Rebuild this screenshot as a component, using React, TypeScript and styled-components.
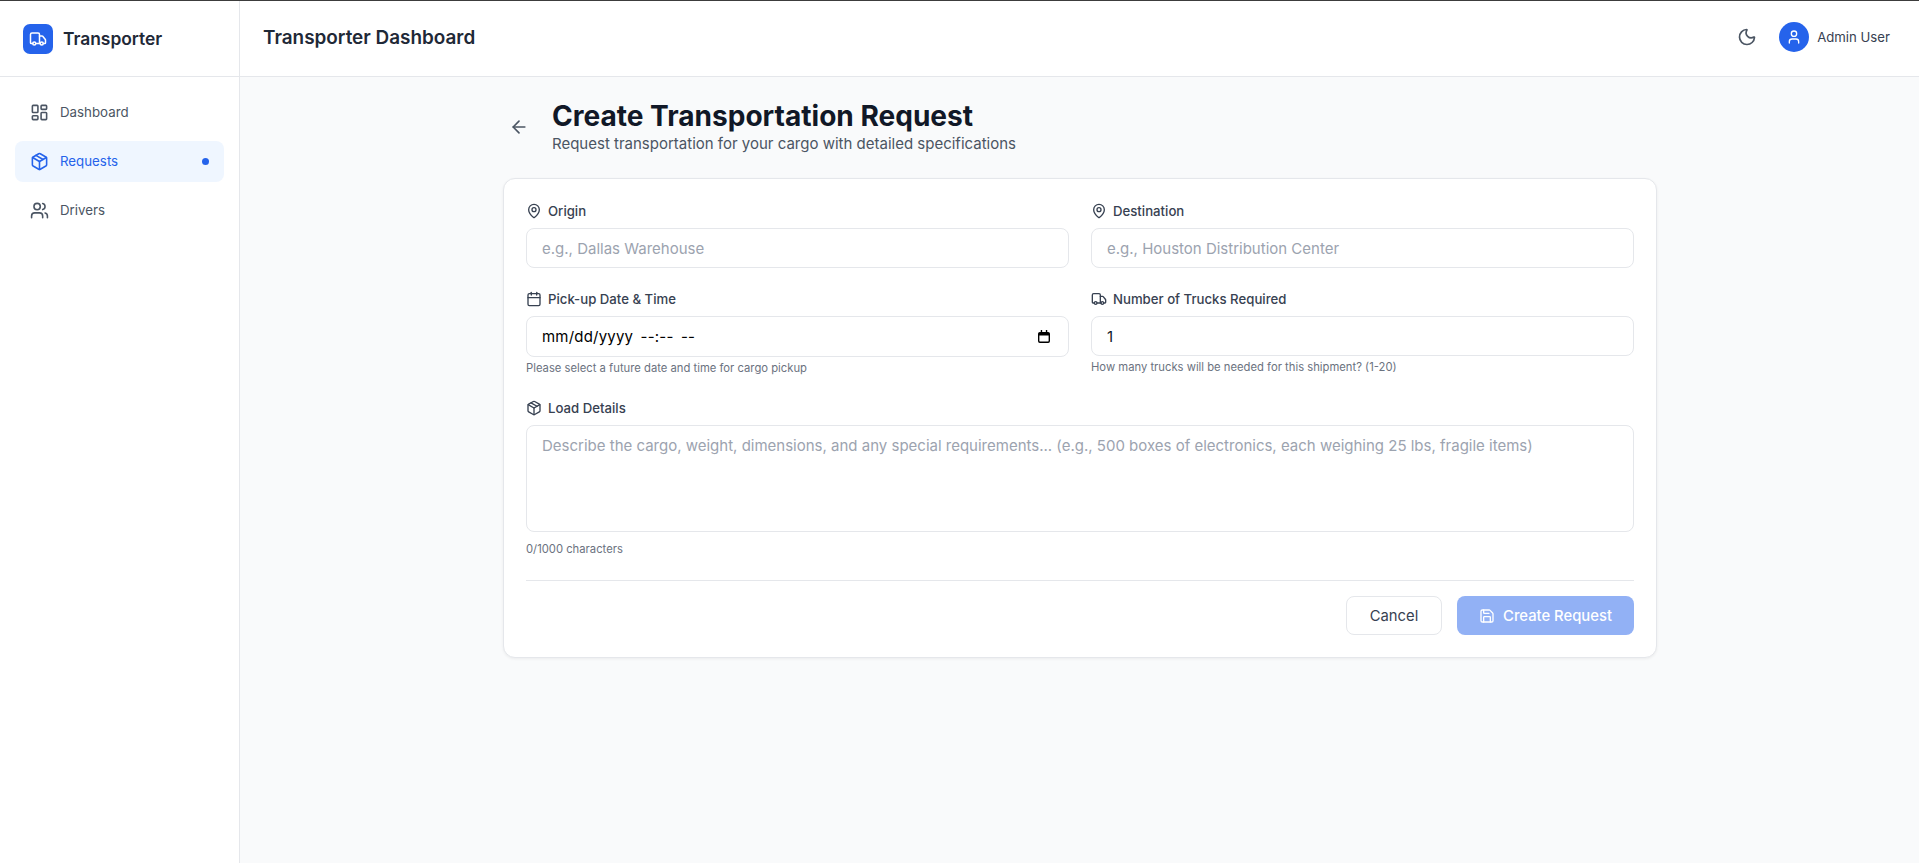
import React from 'react';
import styled, { createGlobalStyle } from 'styled-components';
import { ArrowLeft, Calendar, LayoutDashboard, MapPin, Moon, Package, Save, Truck, User, Users } from 'lucide-react';

const GlobalStyle = createGlobalStyle`
  * { box-sizing: border-box; }
  html, body { margin: 0; padding: 0; height: 100%; }
  body {
    font-family: Inter, "Liberation Sans", sans-serif;
    background: #f9fafb;
    color: #111827;
  }
`;

const Shell = styled.div`
  display: flex;
  height: 863px;
  border-top: 1px solid #3c3c3c;
  overflow: hidden;
`;

const Sidebar = styled.aside`
  width: 240px;
  flex-shrink: 0;
  background: #fff;
  border-right: 1px solid #e5e7eb;
`;

const Brand = styled.div`
  display: flex;
  align-items: center;
  gap: 10px;
  height: 76px;
  padding: 0 23px;
  border-bottom: 1px solid #e5e7eb;
`;

const BrandLogo = styled.div`
  width: 30px;
  height: 30px;
  border-radius: 7px;
  background: #2563eb;
  color: #fff;
  display: flex;
  align-items: center;
  justify-content: center;
`;

const BrandName = styled.span`
  font-size: 17.4px;
  font-weight: 600;
  color: #1f2937;
`;

const Nav = styled.nav`
  display: flex;
  flex-direction: column;
  gap: 8px;
  padding: 15px;
`;

const NavItem = styled.a<{ $active?: boolean }>`
  display: flex;
  align-items: center;
  gap: 11px;
  height: 41px;
  padding: 0 15px 1px;
  border-radius: 8px;
  font-size: 13.3px;
  font-weight: 400;
  color: ${(p) => (p.$active ? '#2563eb' : '#4b5563')};
  background: ${(p) => (p.$active ? '#eff6ff' : 'transparent')};
`;

const NavDot = styled.span`
  width: 7px;
  height: 7px;
  border-radius: 50%;
  background: #2563eb;
  margin-left: auto;
`;

const Column = styled.div`
  flex: 1;
  min-width: 0;
  display: flex;
  flex-direction: column;
`;

const Header = styled.header`
  display: flex;
  align-items: center;
  justify-content: space-between;
  height: 76px;
  padding: 0 29px 3px 23px;
  background: #fff;
  border-bottom: 1px solid #e5e7eb;
`;

const HeaderTitle = styled.h1`
  margin: 0;
  font-size: 18.9px;
  font-weight: 600;
  color: #1f2937;
`;

const HeaderRight = styled.div`
  display: flex;
  align-items: center;
  gap: 22px;
`;

const ThemeToggle = styled.button`
  display: flex;
  padding: 0;
  border: none;
  background: none;
  color: #4b5563;
`;

const UserBox = styled.div`
  display: flex;
  align-items: center;
  gap: 8px;
`;

const Avatar = styled.div`
  width: 30px;
  height: 30px;
  border-radius: 50%;
  background: #2563eb;
  color: #fff;
  display: flex;
  align-items: center;
  justify-content: center;
`;

const UserName = styled.span`
  font-size: 13.2px;
  font-weight: 400;
  color: #374151;
`;

const Main = styled.main`
  flex: 1;
  padding: 22px 0 0 1px;
`;

const Content = styled.div`
  width: 1154px;
  margin: 0 auto;
`;

const TitleRow = styled.div`
  display: flex;
  align-items: center;
  gap: 23px;
  padding-left: 6px;
  margin-bottom: 23px;
`;

const BackButton = styled.button`
  display: flex;
  padding: 0;
  border: none;
  background: none;
  color: #4b5563;
`;

const PageTitle = styled.h2`
  margin: 0;
  font-size: 28.05px;
  line-height: 34px;
  font-weight: 700;
  color: #111827;
`;

const PageSubtitle = styled.p`
  margin: 0;
  font-size: 15px;
  line-height: 22px;
  color: #4b5563;
`;

const Card = styled.form`
  background: #fff;
  border: 1px solid #e5e7eb;
  border-radius: 12px;
  box-shadow: 0 1px 3px rgba(0, 0, 0, 0.06);
  padding: 22px;
`;

const FieldGrid = styled.div`
  display: grid;
  grid-template-columns: 1fr 1fr;
  column-gap: 22px;
  row-gap: 21px;
`;

const Field = styled.div<{ $wide?: boolean }>`
  display: flex;
  flex-direction: column;
  grid-column: ${(p) => (p.$wide ? '1 / -1' : 'auto')};
`;

const Label = styled.label`
  display: flex;
  align-items: center;
  gap: 6px;
  height: 19px;
  margin-bottom: 8px;
  font-size: 13.2px;
  font-weight: 500;
  color: #374151;
`;

const TextInput = styled.input`
  width: 100%;
  height: 40px;
  padding: 0 15px;
  border: 1px solid #e5e7eb;
  border-radius: 8px;
  background: #fff;
  font-family: inherit;
  font-size: 15px;
  color: #111827;
  outline: none;

  &::placeholder {
    color: #9ca3af;
  }
`;

const DateField = styled.div`
  position: relative;
`;

const DateInput = styled(TextInput)`
  height: 41px;
  display: block;
  color: #000;
  letter-spacing: 0.2px;
  word-spacing: 3px;
`;

const DateIndicator = styled.svg`
  position: absolute;
  top: 14px;
  right: 19px;
  width: 12px;
  height: 13px;
`;

const TextArea = styled.textarea`
  display: block;
  width: 100%;
  height: 107px;
  padding: 8px 15px;
  border: 1px solid #e5e7eb;
  border-radius: 8px;
  background: #fff;
  font-family: inherit;
  font-size: 15px;
  line-height: 24px;
  resize: none;
  outline: none;

  &::placeholder {
    color: #9ca3af;
  }
`;

const Hint = styled.p<{ $far?: boolean }>`
  margin: ${(p) => (p.$far ? '10px' : '4px')} 0 1px;
  font-size: 11.25px;
  line-height: 15px;
  color: #6b7280;
`;

const Footer = styled.div`
  display: flex;
  justify-content: flex-end;
  gap: 15px;
  margin-top: 22px;
  padding-top: 15px;
  border-top: 1px solid #e5e7eb;
`;

const CancelButton = styled.button`
  height: 39px;
  width: 96px;
  border: 1px solid #e5e7eb;
  border-radius: 8px;
  background: #fff;
  font-family: inherit;
  font-size: 14.8px;
  font-weight: 400;
  color: #374151;
`;

const SubmitButton = styled.button`
  display: flex;
  align-items: center;
  justify-content: center;
  gap: 8px;
  height: 39px;
  width: 177px;
  border: none;
  border-radius: 8px;
  background: #92b1f5;
  font-family: inherit;
  font-size: 14.8px;
  font-weight: 500;
  color: #fff;
`;

const App: React.FC = () => {
  return (
    <Shell>
      <GlobalStyle />
      <Sidebar>
        <Brand>
          <BrandLogo>
            <Truck size={18} />
          </BrandLogo>
          <BrandName>Transporter</BrandName>
        </Brand>
        <Nav>
          <NavItem>
            <LayoutDashboard size={19} />
            Dashboard
          </NavItem>
          <NavItem $active>
            <Package size={19} />
            Requests
            <NavDot />
          </NavItem>
          <NavItem>
            <Users size={19} />
            Drivers
          </NavItem>
        </Nav>
      </Sidebar>
      <Column>
        <Header>
          <HeaderTitle>Transporter Dashboard</HeaderTitle>
          <HeaderRight>
            <ThemeToggle type="button">
              <Moon size={20} />
            </ThemeToggle>
            <UserBox>
              <Avatar>
                <User size={16} />
              </Avatar>
              <UserName>Admin User</UserName>
            </UserBox>
          </HeaderRight>
        </Header>
        <Main>
          <Content>
            <TitleRow>
              <BackButton type="button">
                <ArrowLeft size={20} />
              </BackButton>
              <div>
                <PageTitle>Create Transportation Request</PageTitle>
                <PageSubtitle>Request transportation for your cargo with detailed specifications</PageSubtitle>
              </div>
            </TitleRow>
            <Card onSubmit={(e) => e.preventDefault()}>
              <FieldGrid>
                <Field>
                  <Label>
                    <MapPin size={16} />
                    Origin
                  </Label>
                  <TextInput placeholder="e.g., Dallas Warehouse" />
                </Field>
                <Field>
                  <Label>
                    <MapPin size={16} />
                    Destination
                  </Label>
                  <TextInput placeholder="e.g., Houston Distribution Center" />
                </Field>
                <Field>
                  <Label>
                    <Calendar size={16} />
                    Pick-up Date &amp; Time
                  </Label>
                  <DateField>
                    <DateInput defaultValue="mm/dd/yyyy --:-- --" />
                    <DateIndicator viewBox="0 0 13 14">
                      <path
                        d="M3 0v2H2a2 2 0 0 0-2 2v8a2 2 0 0 0 2 2h9a2 2 0 0 0 2-2V4a2 2 0 0 0-2-2h-1V0H8.5v2h-4V0zM1.5 6h10v6a.5.5 0 0 1-.5.5H2a.5.5 0 0 1-.5-.5z"
                        fill="#000"
                      />
                    </DateIndicator>
                  </DateField>
                  <Hint>Please select a future date and time for cargo pickup</Hint>
                </Field>
                <Field>
                  <Label>
                    <Truck size={16} />
                    Number of Trucks Required
                  </Label>
                  <TextInput type="number" defaultValue={1} />
                  <Hint>How many trucks will be needed for this shipment? (1-20)</Hint>
                </Field>
                <Field $wide>
                  <Label>
                    <Package size={16} />
                    Load Details
                  </Label>
                  <TextArea placeholder="Describe the cargo, weight, dimensions, and any special requirements... (e.g., 500 boxes of electronics, each weighing 25 lbs, fragile items)" />
                  <Hint $far>0/1000 characters</Hint>
                </Field>
              </FieldGrid>
              <Footer>
                <CancelButton type="button">Cancel</CancelButton>
                <SubmitButton type="submit">
                  <Save size={16} />
                  Create Request
                </SubmitButton>
              </Footer>
            </Card>
          </Content>
        </Main>
      </Column>
    </Shell>
  );
};

export default App;
